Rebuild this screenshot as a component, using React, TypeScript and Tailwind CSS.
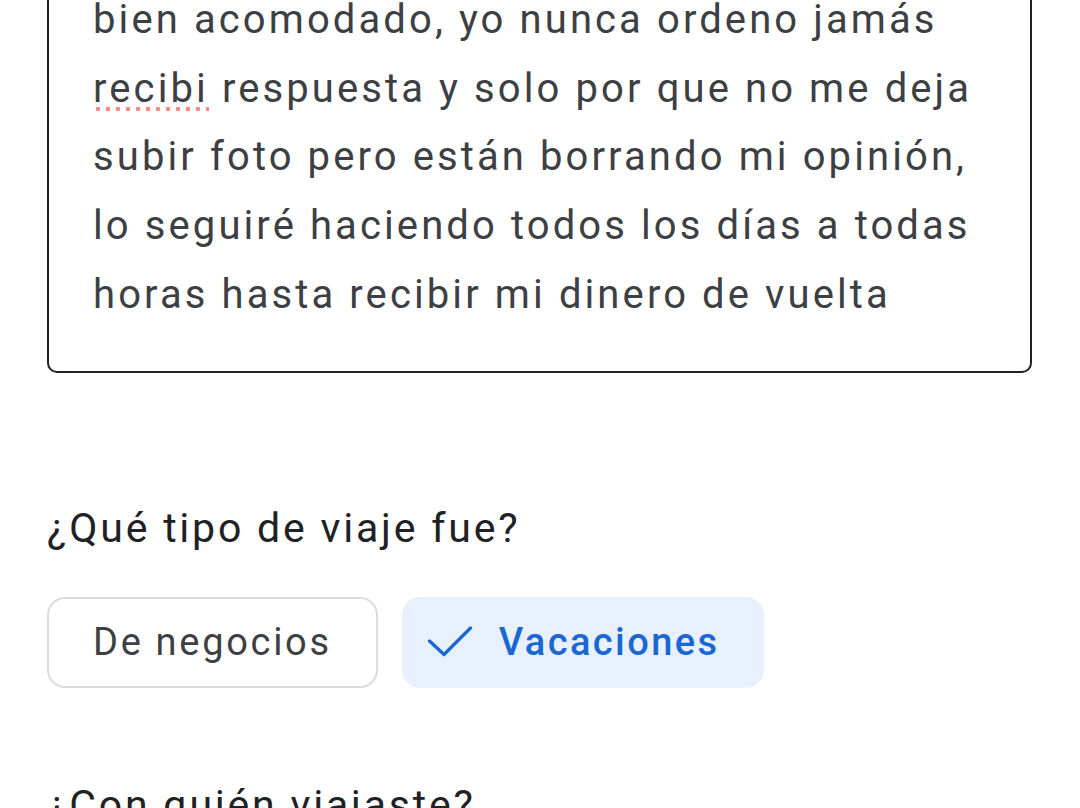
import React from "react";

const lines = [
  "bien acomodado, yo nunca ordeno jamás",
  null,
  "subir foto pero están borrando mi opinión,",
  "lo seguiré haciendo todos los días a todas",
  "horas hasta recibir mi dinero de vuelta",
];

const CheckIcon = () => (
  <svg width="44" height="32" viewBox="0 0 44 32" fill="none" className="shrink-0">
    <polyline
      points="1.5,15 16,28.5 42.5,2"
      stroke="#1967d2"
      strokeWidth="3.2"
      strokeLinecap="round"
      strokeLinejoin="round"
    />
  </svg>
);

export default function App() {
  return (
    <div
      className="w-[1080px] h-[808px] overflow-hidden bg-white px-[47px] pr-[48px]"
      style={{ fontFamily: "Roboto, 'Noto Sans', sans-serif" }}
    >
      {/* review text box */}
      <div className="-mt-[56px] border-[2.5px] border-[#202124] rounded-[10px] pl-[44px] pr-[20px] pt-[40px] pb-[41px] text-[40px] leading-[68.7px] text-[#3c4043] tracking-[3.1px] whitespace-nowrap">
        {lines.map((l, i) =>
          l === null ? (
            <div key={i}>
              <span className="bg-[radial-gradient(circle,_#f28b82_2px,_transparent_2.6px)] bg-[length:10px_6px] bg-repeat-x bg-[position:0_100%]">
                recibi
              </span>{" "}
              respuesta y solo por que no me deja
            </div>
          ) : (
            <div key={i}>{l}</div>
          )
        )}
      </div>

      <h2 className="mt-[131px] text-[41px] leading-[48px] text-[#202124] tracking-[2.8px]">
        ¿Qué tipo de viaje fue?
      </h2>

      <div className="mt-[45px] flex gap-[24px]">
        <button className="h-[91px] rounded-[18px] border-2 border-[#dadce0] pl-[44px] pr-[44px] text-[38px] text-[#3c4043] tracking-[2.7px] flex items-center">
          De negocios
        </button>
        <button className="h-[91px] rounded-[18px] bg-[#e8f0fe] pl-[26px] pr-[45px] text-[38px] font-medium text-[#1967d2] tracking-[2.4px] flex items-center gap-[27px]">
          <CheckIcon />
          Vacaciones
        </button>
      </div>

      <h2 className="mt-[93px] text-[41px] leading-[48px] text-[#202124] tracking-[2.8px]">
        ¿Con quién viajaste?
      </h2>
    </div>
  );
}
